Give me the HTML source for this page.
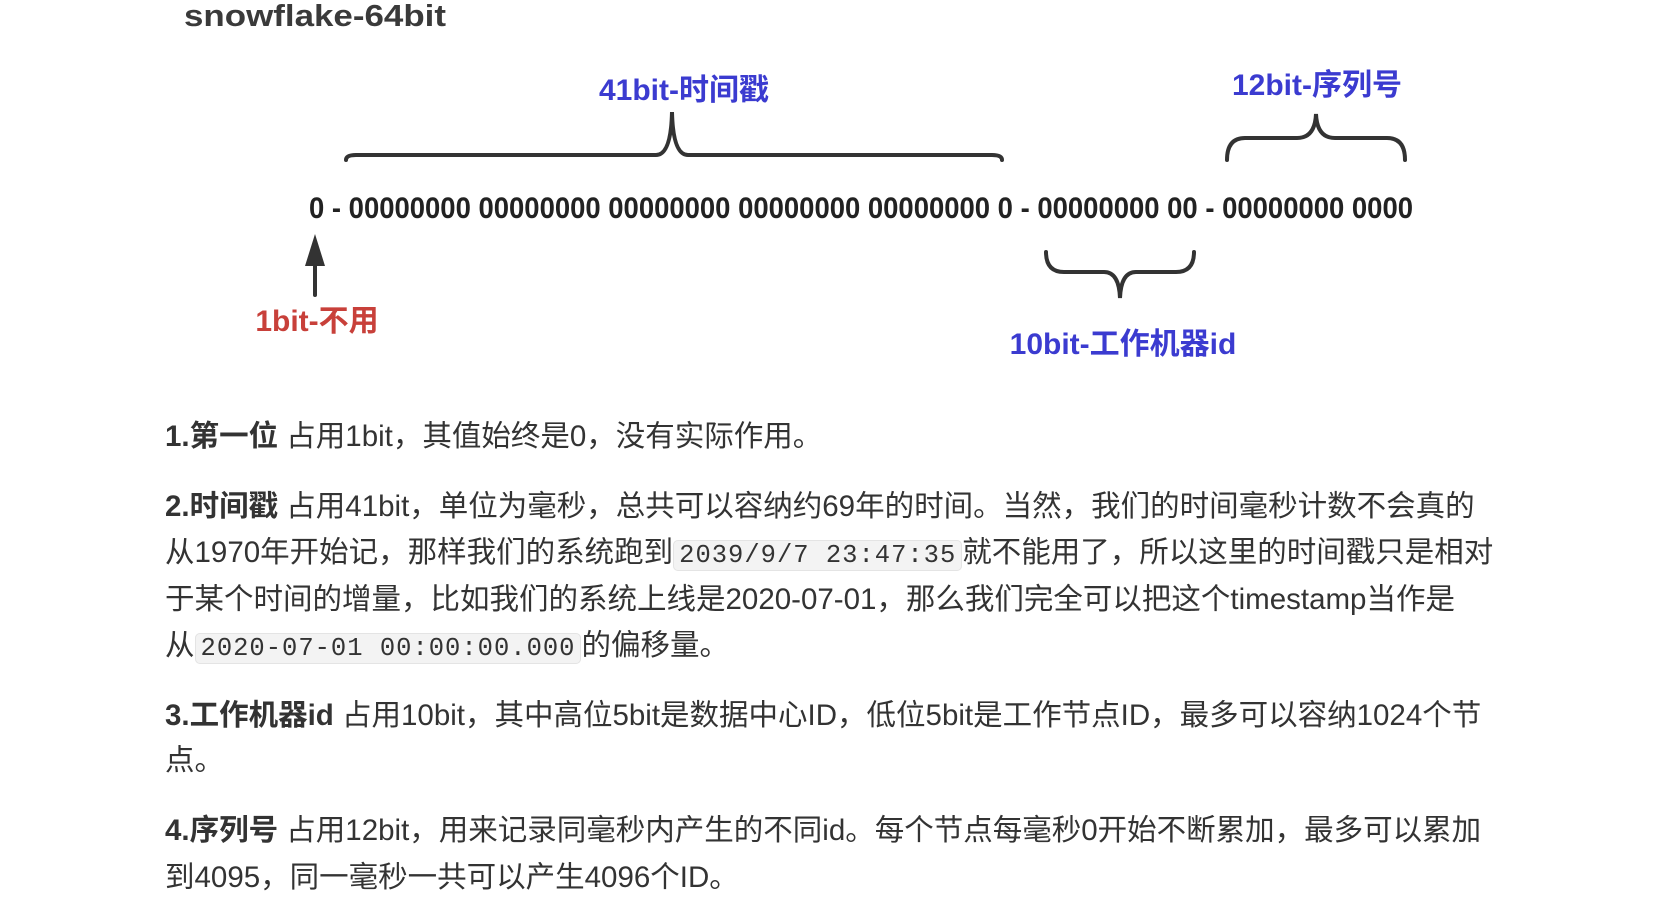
<!DOCTYPE html>
<html><head><meta charset="utf-8"><style>
body{margin:0;width:1660px;height:900px;background:#fff;overflow:hidden;position:relative;font-family:"Liberation Sans","Noto Sans CJK SC",sans-serif;color:#333}
.l{position:absolute;left:165px;white-space:nowrap;font-size:29.5px;line-height:46px}
b{font-weight:bold;color:#333}
code{font-family:"Liberation Mono","Noto Sans CJK SC",monospace;font-size:25.5px;background:#f3f3f3;border:1px solid #e4e4e4;border-radius:5px;padding:0 5px;letter-spacing:1px}
</style></head><body>
<svg width="1660" height="360" style="position:absolute;left:0;top:0" font-family="Liberation Sans, Noto Sans CJK SC, sans-serif">
<text x="184" y="26" font-size="31" font-weight="bold" fill="#3a3a3a" textLength="262" lengthAdjust="spacingAndGlyphs">snowflake-64bit</text>
<text x="684" y="100" font-size="30" font-weight="bold" fill="#3b3bd0" text-anchor="middle">41bit-时间戳</text>
<text x="1317" y="95" font-size="30" font-weight="bold" fill="#3b3bd0" text-anchor="middle">12bit-序列号</text>
<text x="317" y="331" font-size="30" font-weight="bold" fill="#c8403a" text-anchor="middle">1bit-不用</text>
<text x="1123" y="354" font-size="30" font-weight="bold" fill="#3b3bd0" text-anchor="middle">10bit-工作机器id</text>
<g fill="none" stroke="#333" stroke-width="4" stroke-linecap="round">
<path d="M346 160 Q346 155 356 155 L656 155 Q671 155 672 112 Q673 155 688 155 L992 155 Q1002 155 1002 160"/>
<path d="M1227 160 Q1227 138 1245 138 L1297 138 Q1315 138 1316 114 Q1317 138 1335 138 L1387 138 Q1405 138 1405 160"/>
<path d="M1046 252 Q1046 272 1064 272 L1104 272 Q1119 272 1120 298 Q1121 272 1136 272 L1176 272 Q1194 272 1194 252"/>
<path d="M315 295 L315 250"/>
</g>
<path d="M305 266 L315 234 L325 266 Z" fill="#333"/>
<text x="309" y="218" font-size="30" font-weight="bold" fill="#222" textLength="1104" lengthAdjust="spacingAndGlyphs">0 - 00000000 00000000 00000000 00000000 00000000 0 - 00000000 00 - 00000000 0000</text>
</svg>
<div class="l" style="top:414px"><b>1.第一位</b> 占用1bit，其值始终是0，没有实际作用。</div>
<div class="l" style="top:484px"><b>2.时间戳</b> 占用41bit，单位为毫秒，总共可以容纳约69年的时间。当然，我们的时间毫秒计数不会真的</div>
<div class="l" style="top:530px">从1970年开始记，那样我们的系统跑到<code>2039/9/7 23:47:35</code>就不能用了，所以这里的时间戳只是相对</div>
<div class="l" style="top:577px">于某个时间的增量，比如我们的系统上线是2020-07-01，那么我们完全可以把这个timestamp当作是</div>
<div class="l" style="top:623px">从<code>2020-07-01 00:00:00.000</code>的偏移量。</div>
<div class="l" style="top:693px"><b>3.工作机器id</b> 占用10bit，其中高位5bit是数据中心ID，低位5bit是工作节点ID，最多可以容纳1024个节</div>
<div class="l" style="top:738px">点。</div>
<div class="l" style="top:808px"><b>4.序列号</b> 占用12bit，用来记录同毫秒内产生的不同id。每个节点每毫秒0开始不断累加，最多可以累加</div>
<div class="l" style="top:855px">到4095，同一毫秒一共可以产生4096个ID。</div>
</body></html>
